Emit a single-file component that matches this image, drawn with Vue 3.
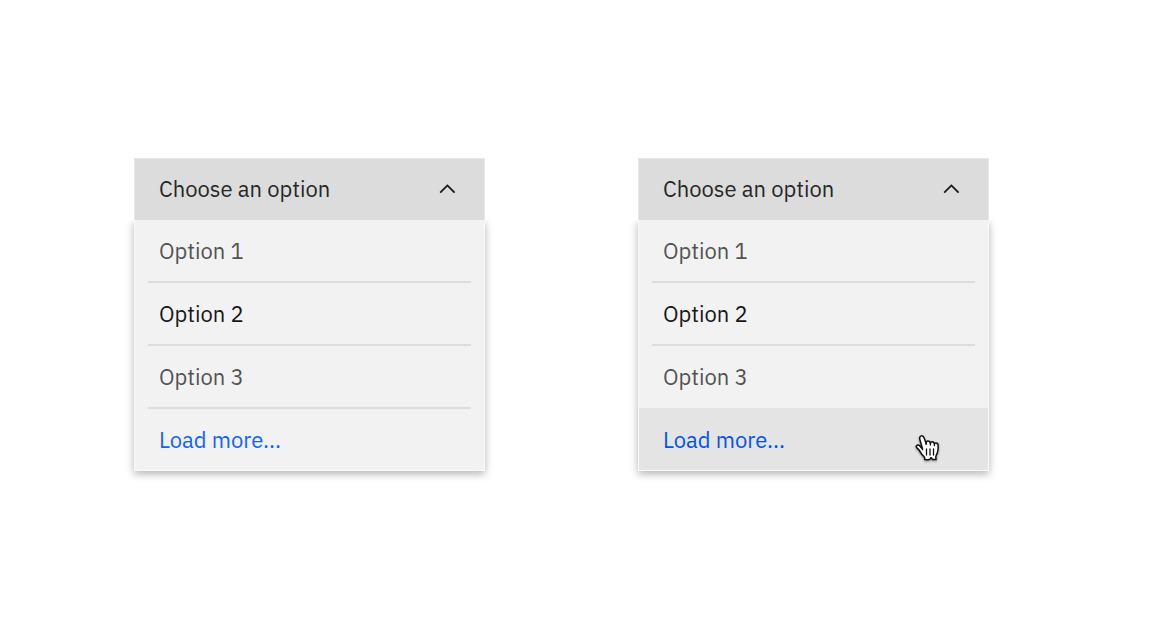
<script setup>
import { ref } from 'vue'

const options = ['Option 1', 'Option 2', 'Option 3']
const menus = ref([
  { id: 'default', open: true, selected: 'Option 2', hovered: false },
  { id: 'hovered', open: true, selected: 'Option 2', hovered: true },
])
</script>

<template>
  <main class="page">
    <section v-for="menu in menus" :key="menu.id" class="dropdown">
      <button
        type="button"
        class="trigger"
        :aria-expanded="menu.open"
        :aria-controls="`menu-${menu.id}`"
        @click="menu.open = !menu.open"
      >
        <span>Choose an option</span>
        <svg class="chevron" viewBox="0 0 16 10" aria-hidden="true">
          <path d="M1.2 8.6 8.400 1.400l7.200 7.200" />
        </svg>
      </button>
      <ul v-show="menu.open" :id="`menu-${menu.id}`" class="list">
        <li v-for="option in options" :key="option" class="row">
          <button
            type="button"
            class="item"
            :class="{ selected: option === menu.selected }"
            @click="menu.selected = option"
          >{{ option }}</button>
        </li>
        <li class="row more" :class="{ hovered: menu.hovered }">
          <button type="button" class="item load">Load more...</button>
          <svg v-if="menu.hovered" class="pointer" viewBox="0 0 26 28" aria-hidden="true">
            <path
              class="hand"
              d="M8.6 15.4C8 12.6 6.6 8.6 5.9 5.6 5.4 3.8 5.7 2.3 7.2 1.9c1.5-.4 2.4.6 3 2.3l1.9 5.1c0-1.7.9-2.5 2.1-2.4 1.3.1 1.9.9 2.2 2.5.2-1.2.9-1.8 2-1.7 1.2.1 1.8 1 2 2.4.3-.9 1-1.3 1.9-1.1 1.3.2 1.9 1.2 1.9 2.9 0 3-.1 4.8-.9 7-.6 1.6-1.5 2.6-1.5 4.2 0 1 .1 1.6.3 2.5h-3.4c-.6-.6-1.1-1.5-1.5-1.9-.5.4-1 1.4-1.8 1.9-1.5.2-3.2.1-4.7 0 .2-1.2.1-2.2-.7-3-1.3-1.4-2.7-2.6-3.6-4.4C5.6 16.5 4.5 15.2 3.2 14.1c-1-.9-1.3-1.8-.5-2.5 1-.9 2.2-.5 3.3.5.9.8 1.7 2.2 2.6 3.3"
            />
            <path class="crease" d="M12.1 8.8v1.7M16.4 9.2v1.7M20.4 10.2v1.5M12.5 14.8v6.2M16 14.8v6.2M19.5 14.8v6.2" />
          </svg>
        </li>
      </ul>
    </section>
  </main>
</template>

<style>
body {
  margin: 0;
  background: #fff;
}
</style>

<style scoped>
.page {
  display: grid;
  grid-template-columns: 1fr 1fr;
  gap: 153px;
  align-items: start;
  padding: 158px 163px 158px 134px;
  font-family: "IBM Plex Sans", Roboto, "Liberation Sans", sans-serif;
  font-size: 22px;
  line-height: 30px;
}

button {
  margin: 0;
  border: 0;
  background: transparent;
  font: inherit;
  text-align: left;
  cursor: pointer;
}

.trigger {
  box-sizing: border-box;
  display: flex;
  align-items: center;
  justify-content: space-between;
  width: 100%;
  height: 62px;
  padding: 0 29px 2px 24px;
  border: 1px solid #e7e7e7;
  border-bottom: 0;
  background: #dcdcdc;
  color: #262626;
}

.chevron {
  width: 16px;
  height: 10px;
  fill: none;
  stroke: #161616;
  stroke-width: 1.8;
}

.list {
  margin: 0;
  padding: 0;
  border: 1px solid #fafafa;
  border-top: 0;
  list-style: none;
  background: #f2f2f2;
  box-shadow: 0 3px 8px rgba(0, 0, 0, 0.3);
  clip-path: inset(0 -16px -20px -16px);
}

.row {
  position: relative;
  display: flex;
  height: 63px;
  padding: 0 13px;
}

.item {
  flex: 1;
  padding: 0 11px;
  border-bottom: 2px solid #dcdcdc;
  color: #525252;
}

.row:has(+ .hovered) {
  height: 62px;
}

.row:has(+ .hovered) .item {
  border-bottom: 0;
}

.selected {
  color: #161616;
}

.more {
  height: 61px;
}

.load {
  border-bottom: 0;
  color: #0f62fe;
}

.hovered {
  height: 62px;
  background: #e4e4e4;
}

.hovered .load {
  padding-top: 2px;
  color: #0353e9;
}

.pointer {
  position: absolute;
  right: 48px;
  top: 26px;
  width: 26px;
  height: 28px;
  filter: drop-shadow(0 1px 1px rgba(0, 0, 0, 0.4));
  pointer-events: none;
}

.hand {
  fill: #fff;
  stroke: #111;
  stroke-width: 1.5;
  stroke-linejoin: round;
  stroke-linecap: round;
}

.crease {
  fill: none;
  stroke: #111;
  stroke-width: 1.3;
  stroke-linecap: round;
}
</style>
